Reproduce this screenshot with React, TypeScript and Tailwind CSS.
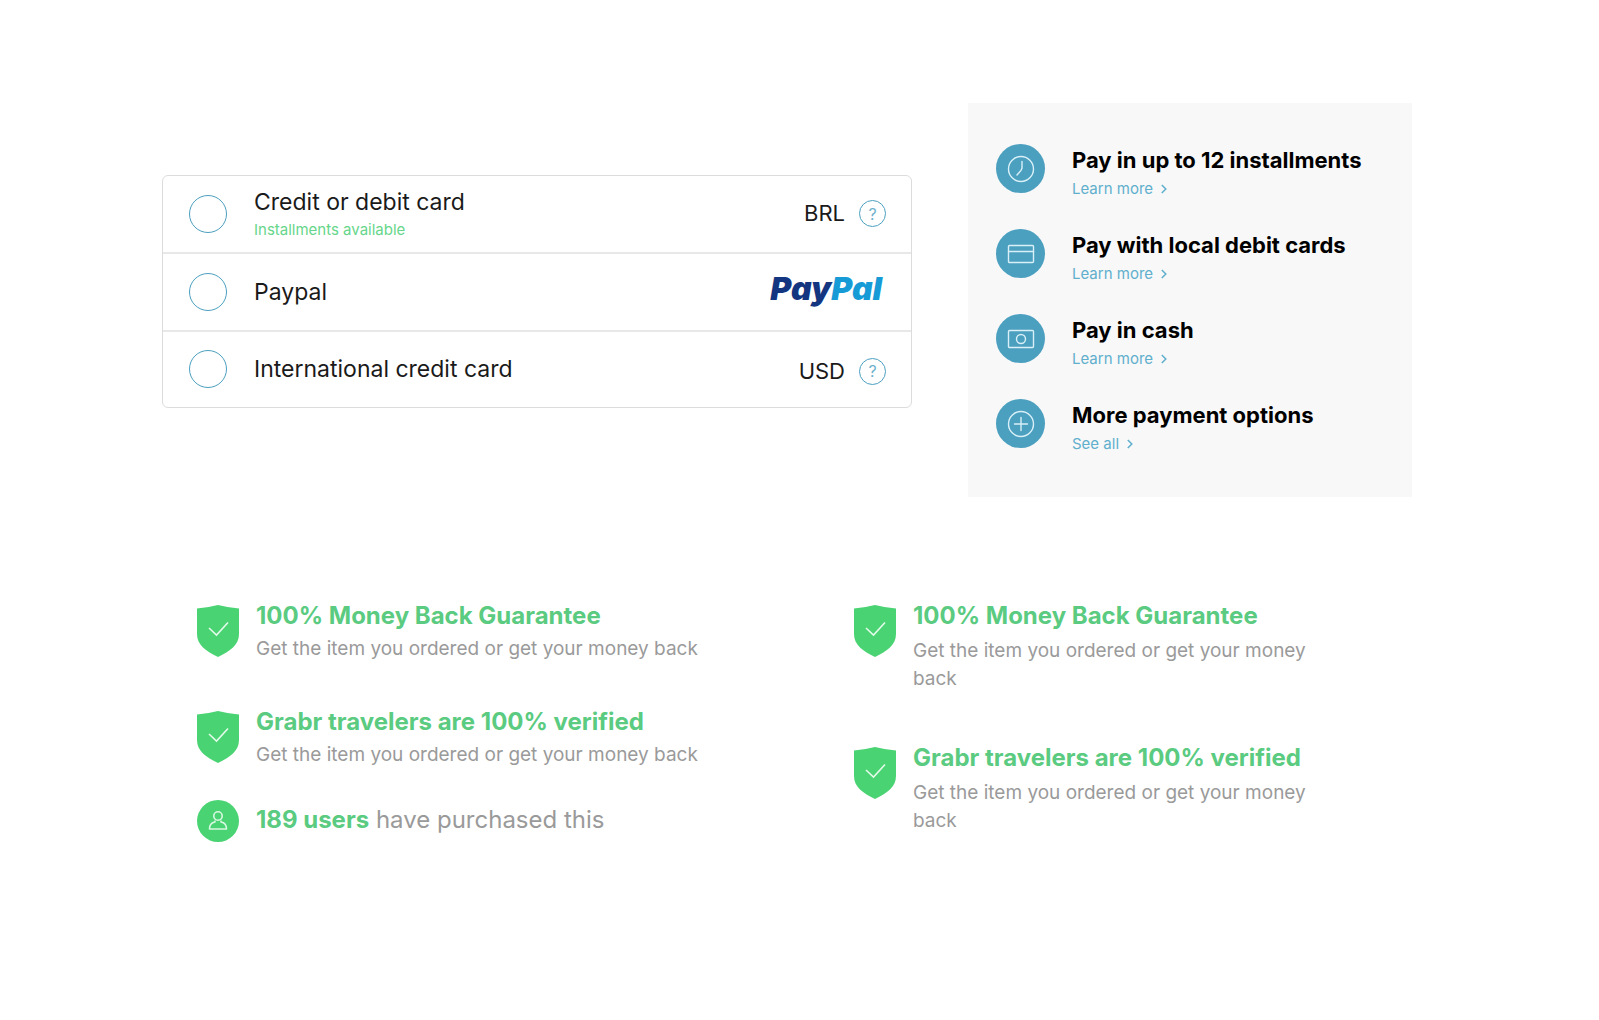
import { useState } from 'react';
import type { ReactNode } from 'react';

const methods = [
  { id: 'card', label: 'Credit or debit card', note: 'Installments available', currency: 'BRL' },
  { id: 'paypal', label: 'Paypal' },
  { id: 'international', label: 'International credit card', currency: 'USD' },
];

const ClockIcon = () => (
  <>
    <circle cx="14" cy="14" r="12.5" />
    <path d="M15 6.5V13l-1 2.5-4 4.5" />
  </>
);

const CardIcon = () => (
  <>
    <rect x="1.5" y="5.5" width="25" height="17" rx="1" />
    <path d="M1.5 11.5h25" />
  </>
);

const CashIcon = () => (
  <>
    <rect x="1.5" y="5.5" width="25" height="17" rx="1" />
    <circle cx="14" cy="14" r="4.5" />
  </>
);

const PlusIcon = () => (
  <>
    <circle cx="14" cy="14" r="12.5" />
    <path d="M14 7.5v13M7.5 14h13" />
  </>
);

const options = [
  { title: 'Pay in up to 12 installments', link: 'Learn more', icon: <ClockIcon /> },
  { title: 'Pay with local debit cards', link: 'Learn more', icon: <CardIcon /> },
  { title: 'Pay in cash', link: 'Learn more', icon: <CashIcon /> },
  { title: 'More payment options', link: 'See all', icon: <PlusIcon /> },
];

function Option({ title, link, icon }: { title: string; link: string; icon: ReactNode }) {
  return (
    <li className="flex h-[49px] items-center gap-[27px]">
      <span className="flex size-[49px] shrink-0 items-center justify-center rounded-full bg-[#4b9fbf]">
        <svg className="size-7" viewBox="0 0 28 28" fill="none" stroke="#d9f0f8" strokeWidth="1.4" strokeLinecap="round">
          {icon}
        </svg>
      </span>
      <div className="pt-2">
        <h3 className="text-[22px] leading-8 font-bold text-black">{title}</h3>
        <a href="#" className="flex items-center gap-2 text-[15px] leading-[26px] text-[#5fafcd]">
          {link}
          <svg className="h-[10px] w-[6px]" viewBox="0 0 6 10" fill="none" stroke="currentColor" strokeWidth="1.5">
            <path d="M.8 1l4 4-4 4" />
          </svg>
        </a>
      </div>
    </li>
  );
}

function Guarantee({ title, className }: { title: string; className: string }) {
  return (
    <div className="flex items-start gap-[17px]">
      <svg className="mt-[5px] h-[52px] w-[42px] shrink-0" viewBox="0 0 42 52" fill="none">
        <path d="M0 3.5Q11 2.6 21 0Q31 2.6 42 3.5V29C42 40 33 46 21 52C9 46 0 40 0 29Z" fill="#4ad373" />
        <path d="M12 23l7.5 7L31 17.5" stroke="#e2fbe9" strokeWidth="1.6" />
      </svg>
      <div>
        <h3 className="text-2xl leading-8 font-bold text-[#5acb80]">{title}</h3>
        <p className={`text-[19px] text-[#9a9a9a] ${className}`}>
          Get the item you ordered or get your money back
        </p>
      </div>
    </div>
  );
}

export default function App() {
  const [method, setMethod] = useState('');

  return (
    <main className="min-h-screen bg-white px-[162px] pt-[103px] font-['Inter','Liberation_Sans',sans-serif]">
      <section className="flex items-start gap-14 pr-[25px]">
        <div className="mt-[72px] flex-1 divide-y-2 divide-[#e8e8e8] rounded-md border border-[#dcdcdc]">
          {methods.map((m) => (
            <div key={m.id} className="group flex h-[78px] items-center pr-[25px] pb-px pl-[26px] last:h-[75px]">
              <input
                type="radio"
                name="method"
                id={m.id}
                checked={method === m.id}
                onChange={() => setMethod(m.id)}
                className="size-[38px] shrink-0 appearance-none rounded-full border border-[#4b9fbf] checked:border-8"
              />
              <label
                htmlFor={m.id}
                className="ml-[27px] flex-1 text-[23px] leading-7 text-[#1a1a1a] group-first:pt-[5px]"
              >
                {m.label}
                {m.note && <span className="block text-[15px] leading-7 text-[#66d68a]">{m.note}</span>}
              </label>
              {m.currency ? (
                <div className="flex items-center group-last:pt-1">
                  <span className="text-[22px] text-[#1a1a1a]">{m.currency}</span>
                  <button
                    type="button"
                    aria-label={`About ${m.currency} payments`}
                    className="ml-[14px] flex size-[27px] items-center justify-center rounded-full border border-[#4b9fbf] text-base text-[#6fb2cc]"
                  >
                    ?
                  </button>
                </div>
              ) : (
                <span className="pr-1 pb-[5px] text-[32px] leading-9 font-black italic text-[#14357f]">
                  Pay<span className="text-[#179bd7]">Pal</span>
                </span>
              )}
            </div>
          ))}
        </div>

        <aside className="w-[444px] bg-[#f8f8f8] px-7 pt-[41px] pb-[49px]">
          <ul className="flex flex-col gap-9">
            {options.map((o) => (
              <Option key={o.title} {...o} />
            ))}
          </ul>
        </aside>
      </section>

      <section className="mt-[103px] grid grid-cols-[657px_1fr] pr-[100px] pl-[35px]">
        <div>
          <Guarantee title="100% Money Back Guarantee" className="mt-px leading-8" />
          <div className="mt-[41px]">
            <Guarantee title="Grabr travelers are 100% verified" className="mt-px leading-8" />
          </div>
          <div className="mt-[29px] flex items-center gap-[17px]">
            <span className="flex size-[42px] items-center justify-center rounded-full bg-[#4ad373]">
              <svg className="size-5" viewBox="0 0 20 20" fill="none" stroke="#d8f8e1" strokeWidth="1.6" strokeLinejoin="round">
                <circle cx="10" cy="5" r="4.2" />
                <path d="M7 9.5V11C4 11.5 1.5 13 1.500 18h17C18.500 13 16 11.5 13 11V9.5" />
              </svg>
            </span>
            <p className="pb-[3px] text-2xl text-[#9a9a9a]">
              <strong className="font-bold text-[#5acb80]">189 users</strong> have purchased this
            </p>
          </div>
        </div>
        <div className="flex max-w-[480px] flex-col gap-[49px]">
          <Guarantee title="100% Money Back Guarantee" className="mt-[5px] leading-7" />
          <Guarantee title="Grabr travelers are 100% verified" className="mt-[5px] leading-7" />
        </div>
      </section>
    </main>
  );
}
